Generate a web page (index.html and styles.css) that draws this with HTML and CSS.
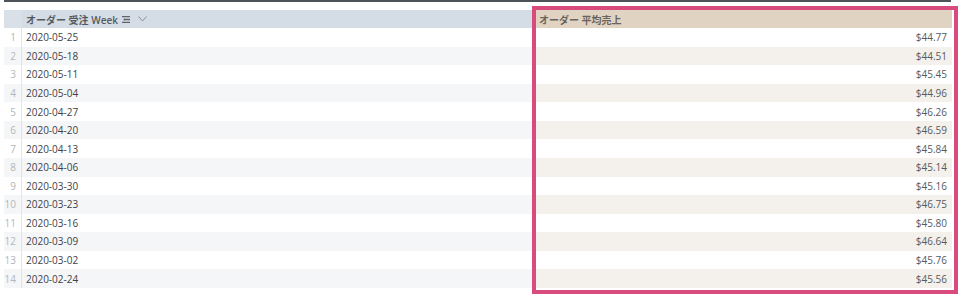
FILE: index.html
```html
<!DOCTYPE html>
<html lang="ja">
<head>
<meta charset="utf-8">
<link rel="stylesheet" href="styles.css">
</head>
<body>
<div class="page">
  <div class="topbar"></div>
  <div class="table">
    <div class="row head">
      <div class="num"></div>
      <div class="c1"><span>オーダー 受注 Week</span>
        <svg class="ico-pivot" width="8" height="7" viewBox="0 0 8 7"><path d="M0 0.6H8M2.3 3.5H8M2.3 2.4V4.6M0 6.4H8" stroke="#5f646a" stroke-width="1.3" fill="none"/></svg>
        <svg class="ico-chev" width="9" height="6" viewBox="0 0 9 6"><path d="M0.5 0.5L4.5 5L8.5 0.5" stroke="#8a9097" stroke-width="1" fill="none"/></svg>
      </div>
      <div class="c2">オーダー 平均売上</div>
    </div>
    <div class="row"><div class="num">1</div><div class="c1">2020-05-25</div><div class="c2">$44.77</div></div>
    <div class="row alt"><div class="num">2</div><div class="c1">2020-05-18</div><div class="c2">$44.51</div></div>
    <div class="row"><div class="num">3</div><div class="c1">2020-05-11</div><div class="c2">$45.45</div></div>
    <div class="row alt"><div class="num">4</div><div class="c1">2020-05-04</div><div class="c2">$44.96</div></div>
    <div class="row"><div class="num">5</div><div class="c1">2020-04-27</div><div class="c2">$46.26</div></div>
    <div class="row alt"><div class="num">6</div><div class="c1">2020-04-20</div><div class="c2">$46.59</div></div>
    <div class="row"><div class="num">7</div><div class="c1">2020-04-13</div><div class="c2">$45.84</div></div>
    <div class="row alt"><div class="num">8</div><div class="c1">2020-04-06</div><div class="c2">$45.14</div></div>
    <div class="row"><div class="num">9</div><div class="c1">2020-03-30</div><div class="c2">$45.16</div></div>
    <div class="row alt"><div class="num">10</div><div class="c1">2020-03-23</div><div class="c2">$46.75</div></div>
    <div class="row"><div class="num">11</div><div class="c1">2020-03-16</div><div class="c2">$45.80</div></div>
    <div class="row alt"><div class="num">12</div><div class="c1">2020-03-09</div><div class="c2">$46.64</div></div>
    <div class="row"><div class="num">13</div><div class="c1">2020-03-02</div><div class="c2">$45.76</div></div>
    <div class="row alt"><div class="num">14</div><div class="c1">2020-02-24</div><div class="c2">$45.56</div></div>
  </div>
  <div class="highlight"></div>
</div>
</body>
</html>
```

FILE: styles.css
```css
html, body {
  margin: 0;
  padding: 0;
  background: #ffffff;
}
.page {
  position: relative;
  width: 960px;
  height: 296px;
  padding-left: 4px;
  box-sizing: border-box;
  font-family: "Open Sans", "Noto Sans", "Noto Sans CJK JP", sans-serif;
  font-size: 10px;
  color: #3e4247;
}
.topbar {
  width: 947px;
  height: 2px;
  background: #4e535a;
}
.table {
  margin-top: 8px;
  width: 948px;
  display: flex;
  flex-direction: column;
}
.row {
  display: grid;
  grid-template-columns: 18px 512px 418px;
  height: 18.57px;
  align-items: center;
  background: #ffffff;
}
.row.head {
  height: 18px;
  background: #d4dce5;
  font-weight: 600;
  color: #555a60;
}
.row > div {
  height: 100%;
  display: flex;
  align-items: center;
  box-sizing: border-box;
  white-space: nowrap;
}
.num {
  justify-content: flex-end;
  padding-right: 5px;
  color: #b3b6ba;
  border-right: 1px solid #e2e4e7;
}
.head .num {
  border-right: none;
  background: #d9e0e7;
}
.c1 {
  padding-left: 4px;
}
.c2 {
  justify-content: flex-end;
  padding-right: 5px;
  color: #555a5f;
}
.row.alt .num,
.row.alt .c1 {
  background: #f5f6f8;
}
.row.alt .c2 {
  background: #f4f1ec;
}
.head .c2 {
  justify-content: flex-start;
  padding-left: 5px;
  background: #e1d3c1;
  color: #6a645c;
}
.ico-pivot {
  margin-left: 4px;
}
.ico-chev {
  margin-left: 8px;
}
.highlight {
  position: absolute;
  left: 532px;
  top: 6px;
  width: 426px;
  height: 288px;
  border: 4px solid #d84b7d;
  box-sizing: border-box;
  pointer-events: none;
}
```
